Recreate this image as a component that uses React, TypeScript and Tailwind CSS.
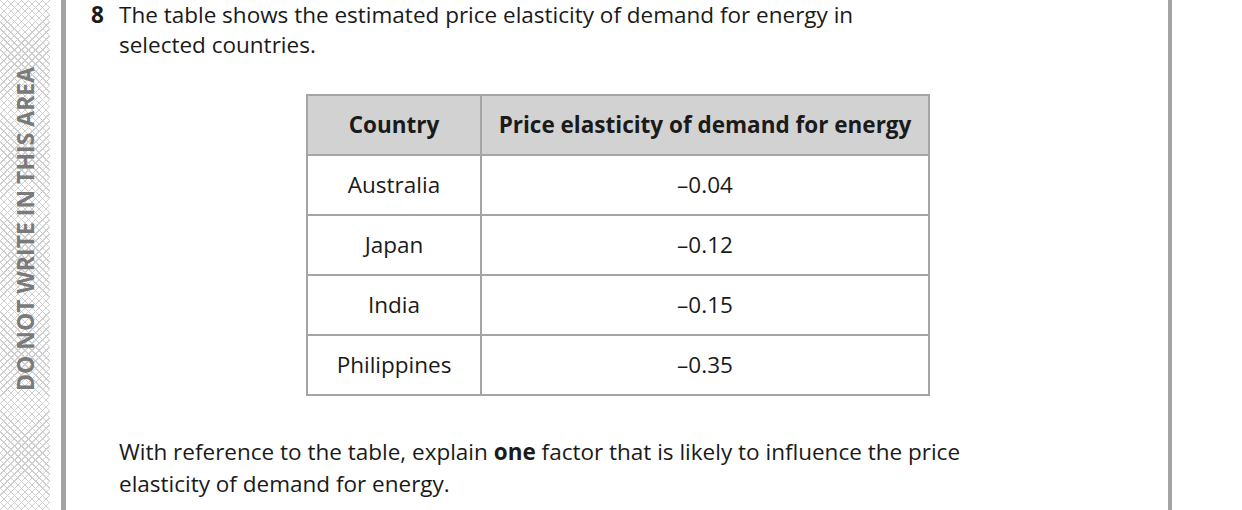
import React from "react";

const rows = [
  { country: "Australia", ped: "–0.04" },
  { country: "Japan", ped: "–0.12" },
  { country: "India", ped: "–0.15" },
  { country: "Philippines", ped: "–0.35" },
];

const font = { fontFamily: '"Open Sans", "Noto Sans", sans-serif' };

export default function App() {
  return (
    <div className="flex h-[510px] w-[1242px] overflow-hidden bg-white text-[#1a1a1a]" style={font}>
      {/* margin strip */}
      <div className="flex w-[50px] shrink-0 justify-center bg-[repeating-linear-gradient(45deg,#cfcfcf_0_1px,transparent_1px_5px),repeating-linear-gradient(-45deg,#cfcfcf_0_1px,transparent_1px_5px)]">
        <div className="mt-[62px] h-[333px] rotate-180 text-center text-[23px] font-bold text-[#7a7a7a] [writing-mode:vertical-rl] leading-none">
          DO NOT WRITE IN THIS AREA
        </div>
      </div>
      <div className="ml-[11px] w-[5px] shrink-0 bg-[#a3a3a3]" />

      <div className="w-[1102px] shrink-0 pt-0 text-[22.5px] leading-[30px]">
        <div className="flex">
          <div className="w-[53px] shrink-0 pl-[25px] font-bold">8</div>
          <div>
            <p>The table shows the estimated price elasticity of demand for energy in</p>
            <p>selected countries.</p>
          </div>
        </div>

        <div className="mt-[34px] ml-[240px]">
          <table className="w-[624px] border-collapse text-center">
            <thead>
              <tr className="h-[60px] bg-[#d2d2d2]">
                <th className="w-[174px] border-2 border-[#a5a5a5] font-bold">Country</th>
                <th className="border-2 border-[#a5a5a5] font-bold">Price elasticity of demand for energy</th>
              </tr>
            </thead>
            <tbody>
              {rows.map((r) => (
                <tr key={r.country} className="h-[60px]">
                  <td className="border-2 border-[#a5a5a5]">{r.country}</td>
                  <td className="border-2 border-[#a5a5a5]">{r.ped}</td>
                </tr>
              ))}
            </tbody>
          </table>
        </div>

        <div className="mt-[40px] pl-[53px] leading-[32px]">
          <p>
            With reference to the table, explain <span className="font-bold">one</span> factor that is likely to
            influence the price
          </p>
          <p>elasticity of demand for energy.</p>
        </div>
      </div>

      <div className="w-[4px] shrink-0 bg-[#a3a3a3]" />
    </div>
  );
}
